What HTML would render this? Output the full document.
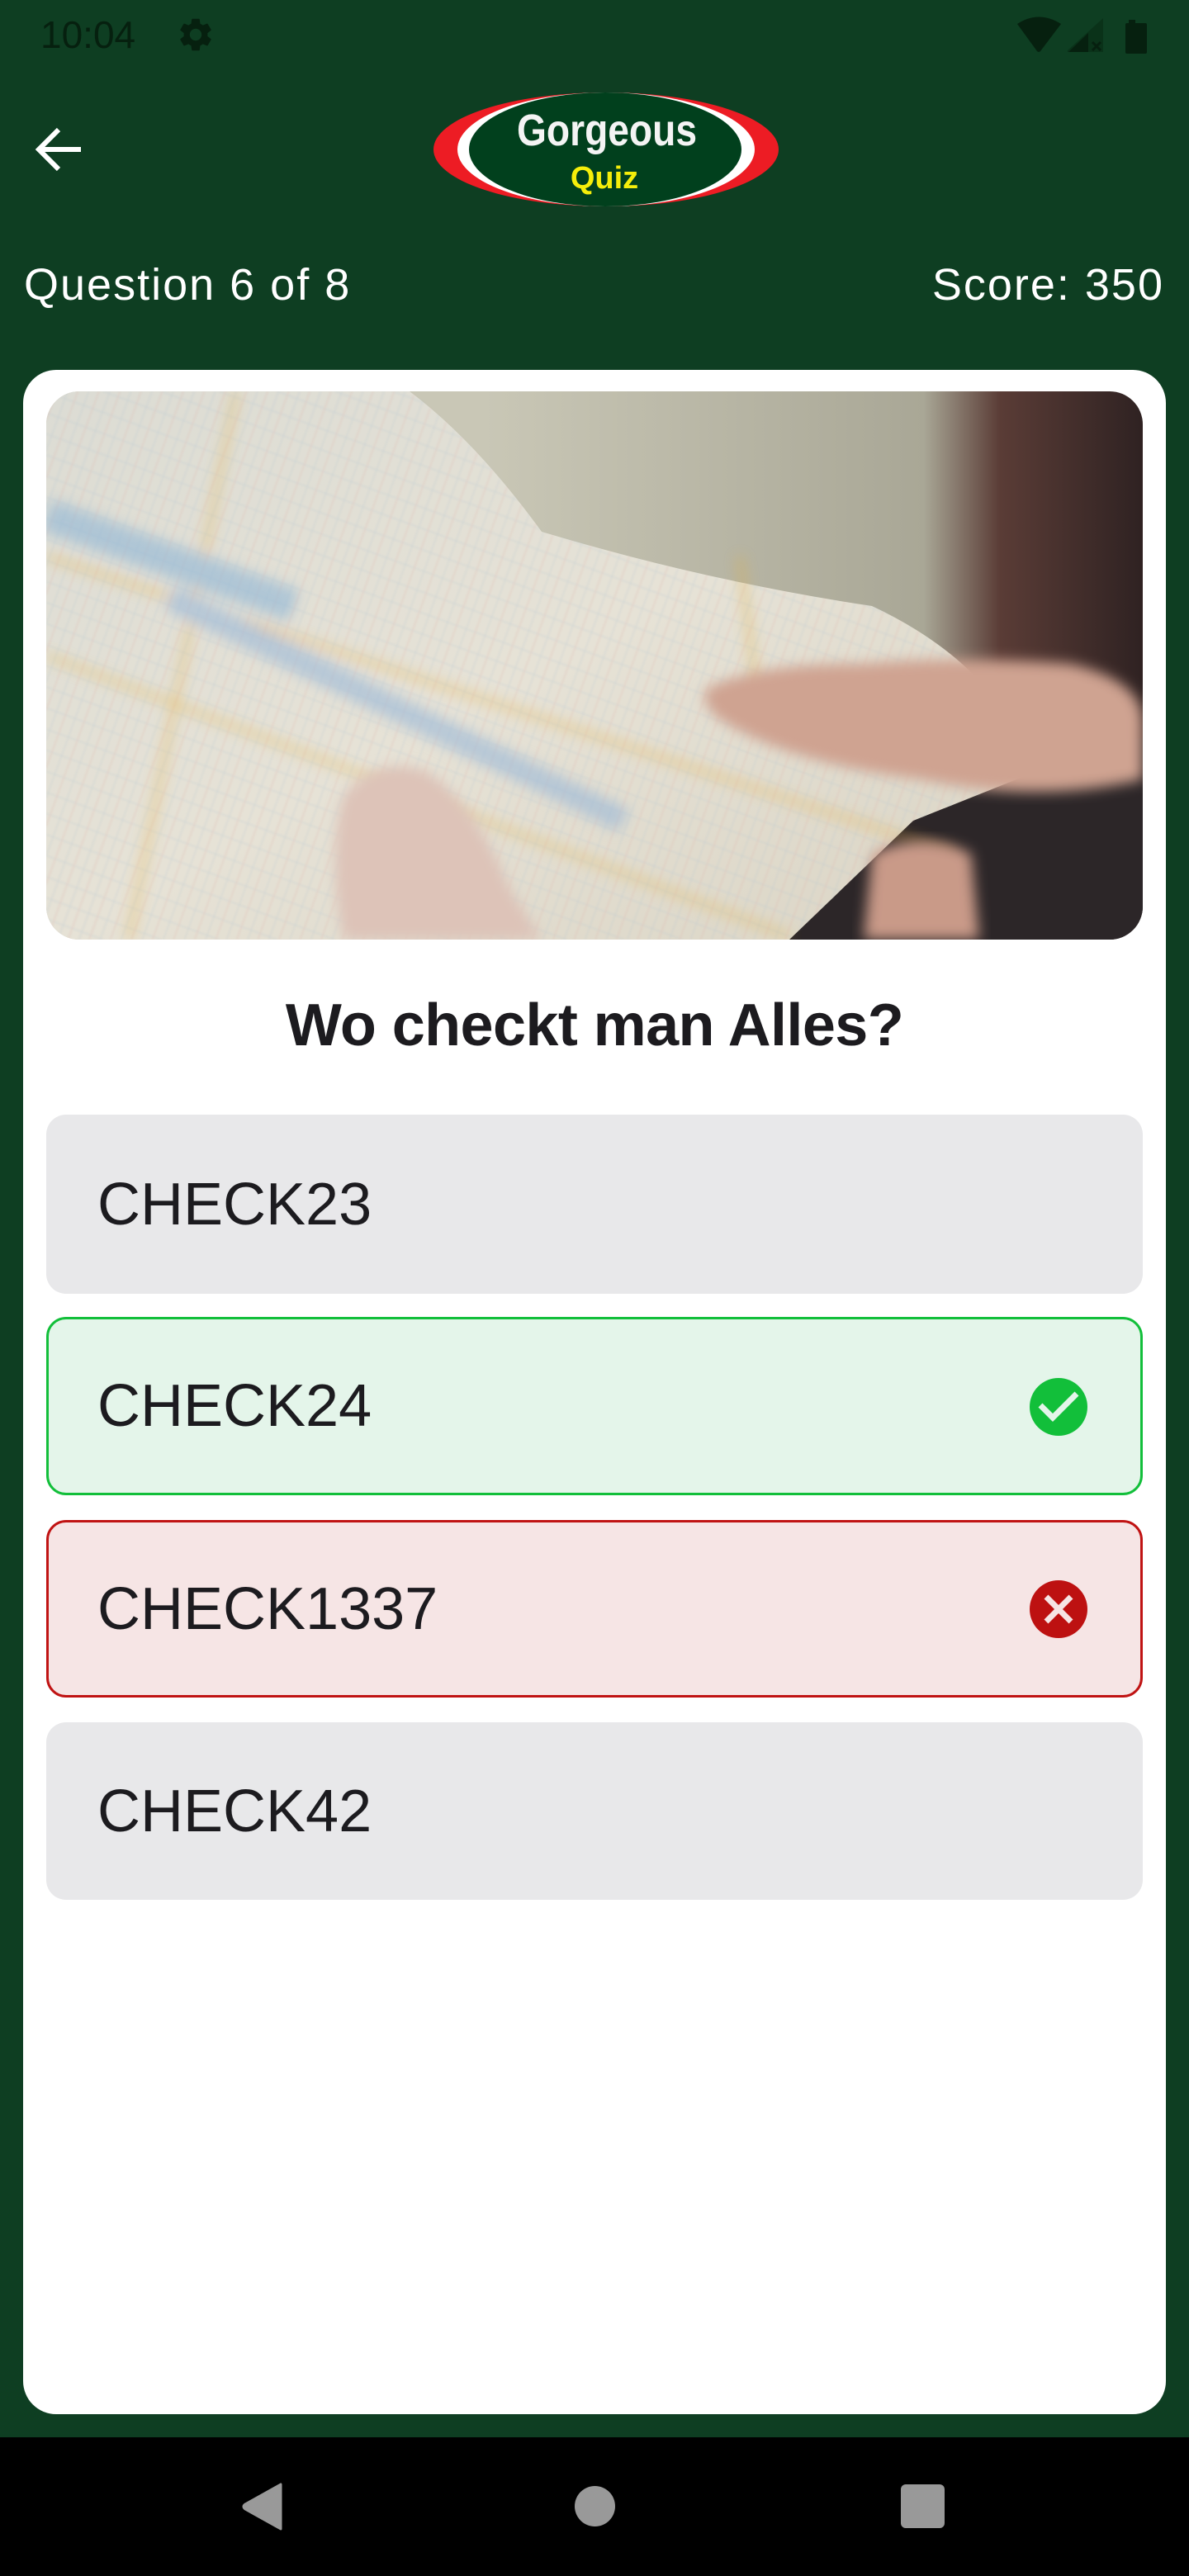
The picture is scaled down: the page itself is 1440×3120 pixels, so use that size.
<!DOCTYPE html>
<html><head><meta charset="utf-8"><style>
*{margin:0;padding:0;box-sizing:border-box}
body{width:1440px;height:3120px;background:#0e3e22;position:relative;overflow:hidden;font-family:"Liberation Sans",sans-serif}
.abs{position:absolute}
.t{position:absolute;white-space:nowrap;line-height:1}
.card{left:28px;top:448px;width:1384px;height:2476px;background:#fff;border-radius:40px}
.opt{position:absolute;left:56px;width:1328px;border-radius:24px;background:#e8e8ea}
.opt span{position:absolute;left:62px;top:50%;transform:translateY(-50%);font-size:72px;color:#1c1b1f;line-height:1}
</style></head><body>
<div class="t" style="left:49px;top:19px;font-size:46px;color:#06200f">10:04</div>
<svg class="abs" style="left:213px;top:18px" width="48" height="48" viewBox="0 0 24 24"><path fill="#06200f" d="M19.14 12.94c.04-.3.06-.61.06-.94s-.02-.64-.07-.94l2.03-1.58a.49.49 0 0 0 .12-.61l-1.920-3.320a.488.488 0 0 0-.59-.22l-2.39.96c-.5-.38-1.030-.7-1.62-.94l-.36-2.54a.484.484 0 0 0-.48-.41h-3.84c-.24 0-.43.17-.47.41l-.36 2.54c-.59.24-1.13.57-1.62.94l-2.39-.96a.48.48 0 0 0-.59.22L2.74 8.87c-.12.21-.08.47.12.61l2.03 1.58c-.05.3-.09.63-.09.94s.02.64.07.94l-2.03 1.58a.49.49 0 0 0-.12.61l1.92 3.32c.12.22.37.29.59.22l2.39-.96c.5.38 1.03.7 1.62.94l.36 2.54c.05.24.24.41.48.41h3.84c.24 0 .44-.17.47-.41l.36-2.540c.59-.24 1.13-.56 1.62-.94l2.39.96c.22.08.47 0 .59-.22l1.92-3.32c.12-.22.07-.47-.12-.61l-2.01-1.58zM12 15.6c-1.98 0-3.6-1.62-3.6-3.6s1.62-3.6 3.6-3.6 3.6 1.62 3.6 3.6-1.62 3.6-3.6 3.6z"/></svg>
<svg class="abs" style="left:1230px;top:18px" width="170" height="50" viewBox="0 0 170 50">
<path d="M2 11 Q28 -6 55 11 L30 44 Q28 46 26 44 Z" fill="#06200f"/>
<path d="M106 4 L106 45 L64 45 Q62 45 63 43 Z" fill="#0a3219"/>
<path d="M88 22 L88 45 L64 45 Z" fill="#06200f"/>
<path d="M93 33 L103 43 M103 33 L93 43" stroke="#06200f" stroke-width="3"/>
<rect x="137" y="6" width="8" height="5" fill="#06200f"/>
<rect x="133" y="10" width="26" height="37" rx="2" fill="#06200f"/>
</svg>
<svg class="abs" style="left:40px;top:151px" width="62" height="60" viewBox="0 0 62 60"><path d="M58 30 H8 M31 6 L7 30 L31 54" stroke="#fff" stroke-width="6" fill="none"/></svg>
<svg class="abs" style="left:520px;top:108px" width="430" height="148" viewBox="0 0 430 148">
<ellipse cx="214" cy="73" rx="209" ry="69" fill="#ed1c24"/>
<ellipse cx="214" cy="73" rx="180" ry="69" fill="#fff"/>
<ellipse cx="213" cy="73" rx="165" ry="69" fill="#01401d"/>
<text x="215" y="68" text-anchor="middle" font-family="Liberation Sans,sans-serif" font-weight="bold" font-size="54" fill="#f4f4f4" textLength="218" lengthAdjust="spacingAndGlyphs">Gorgeous</text>
<text x="212" y="120" text-anchor="middle" font-family="Liberation Sans,sans-serif" font-weight="bold" font-size="38" fill="#f5ee0a">Quiz</text>
</svg>
<div class="t" style="left:29px;top:318px;font-size:54px;color:#fff;letter-spacing:2px">Question 6 of 8</div>
<div class="t" style="right:30px;top:318px;font-size:54px;color:#fff;letter-spacing:2px">Score: 350</div>
<div class="abs card"></div>
<svg class="abs" style="left:56px;top:474px;border-radius:40px" width="1328" height="664" viewBox="0 0 1328 664">
<defs>
<linearGradient id="bg" x1="0" y1="0" x2="1" y2="0"><stop offset="0.4" stop-color="#c9c7b6"/><stop offset="0.8" stop-color="#a9a796"/><stop offset="0.87" stop-color="#5a3c36"/><stop offset="1" stop-color="#2f2222"/></linearGradient>
<linearGradient id="mp" x1="0" y1="0" x2="1" y2="1"><stop offset="0" stop-color="#dcdcd4"/><stop offset="0.5" stop-color="#e6e2d6"/><stop offset="1" stop-color="#dad4c4"/></linearGradient>
<pattern id="grid" width="24" height="24" patternUnits="userSpaceOnUse" patternTransform="rotate(20)"><path d="M0 0 H24 M0 0 V24" stroke="#a9bfd0" stroke-width="1.5"/><path d="M12 0 V24" stroke="#e0b0a8" stroke-width="1"/></pattern>
<filter id="bl"><feGaussianBlur stdDeviation="8"/></filter>
<filter id="bl2"><feGaussianBlur stdDeviation="1.2"/></filter>
</defs>
<rect width="1328" height="664" fill="url(#bg)"/>
<path d="M980 440 L1328 420 L1328 664 L880 664 Z" fill="#2c2628"/>
<path id="map" d="M0 0 L440 0 Q520 60 600 170 Q800 230 1000 260 Q1150 330 1200 460 L1050 520 L900 664 L0 664 Z" fill="url(#mp)"/>
<path d="M0 0 L440 0 Q520 60 600 170 Q800 230 1000 260 Q1150 330 1200 460 L1050 520 L900 664 L0 664 Z" fill="url(#grid)" opacity="0.45" filter="url(#bl2)"/>
<g stroke-width="6" fill="none" opacity="0.6" filter="url(#bl)">
<path d="M230 0 L100 664" stroke="#e8b34a"/>
<path d="M0 200 L1100 560" stroke="#e8b34a"/>
<path d="M0 320 L900 660" stroke="#e4b650"/>
<path d="M840 200 L860 360" stroke="#e3b040"/>
<path d="M150 250 L700 520" stroke="#9ab8d8" stroke-width="30"/>
<path d="M0 150 L300 260" stroke="#8fb6d6" stroke-width="40"/>
</g>
<path d="M800 360 Q860 330 990 330 Q1100 320 1240 330 Q1328 350 1328 400 L1328 470 Q1200 500 1060 470 Q900 450 820 400 Q790 380 800 360 Z" fill="#cfa391" filter="url(#bl)"/>
<path d="M360 490 Q400 440 460 460 Q520 500 560 600 L600 664 L360 664 Q340 560 360 490 Z" fill="#ddc3b8" filter="url(#bl)"/>
<path d="M1000 560 Q1060 530 1120 560 L1130 664 L990 664 Z" fill="#c99a88" filter="url(#bl)"/>
</svg>
<div class="t" style="left:0;width:1440px;text-align:center;top:1206px;font-size:72px;font-weight:bold;color:#1c1b1f;letter-spacing:-0.6px">Wo checkt man Alles?</div>
<div class="opt" style="top:1350px;height:217px"><span>CHECK23</span></div>
<div class="opt" style="top:1595px;height:216px;background:#e4f5ea;border:3px solid #12bf3a"><span style="left:59px">CHECK24</span></div>
<div class="opt" style="top:1841px;height:215px;background:#f6e5e5;border:3px solid #c01313"><span style="left:59px">CHECK1337</span></div>
<div class="opt" style="top:2086px;height:215px"><span>CHECK42</span></div>
<svg class="abs" style="left:1247px;top:1669px" width="70" height="70" viewBox="0 0 70 70"><circle cx="35" cy="35" r="35" fill="#12bf3a"/><path d="M13 33 L28 48 L57 19" stroke="#e4f5ea" stroke-width="7" fill="none"/></svg>
<svg class="abs" style="left:1247px;top:1914px" width="70" height="70" viewBox="0 0 70 70"><circle cx="35" cy="35" r="35" fill="#bd1111"/><path d="M20 20 L50 50 M50 20 L20 50" stroke="#f6e5e5" stroke-width="7"/></svg>
<div class="abs" style="left:0;top:2952px;width:1440px;height:168px;background:#000"></div>
<svg class="abs" style="left:290px;top:3006px" width="54" height="60" viewBox="0 0 54 60"><path d="M50 3 L50 57 L7 33 Q3 30 7 27 Z" fill="#999" stroke="#999" stroke-width="3" stroke-linejoin="round"/></svg>
<div class="abs" style="left:696px;top:3011px;width:49px;height:49px;border-radius:50%;background:#999"></div>
<div class="abs" style="left:1091px;top:3009px;width:53px;height:53px;border-radius:6px;background:#999"></div>
</body></html>
